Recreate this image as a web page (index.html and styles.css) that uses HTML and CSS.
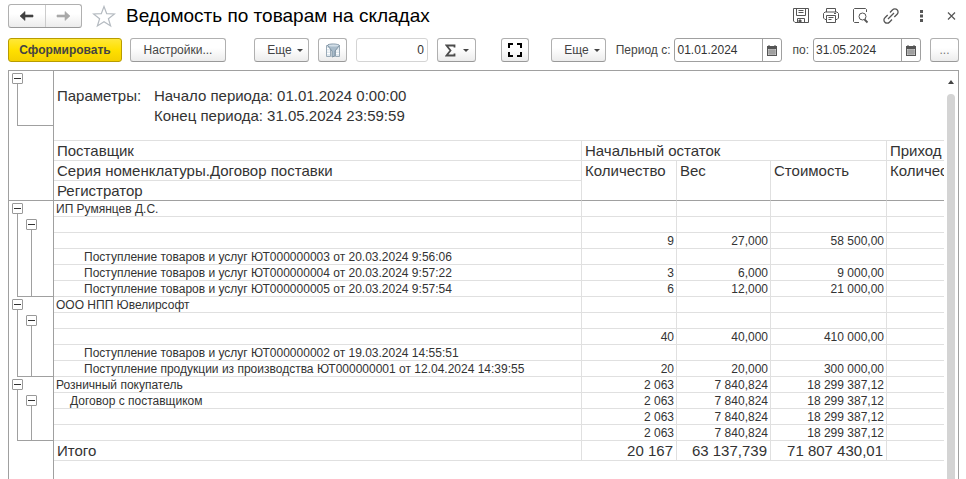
FILE: index.html
```html
<!DOCTYPE html>
<html lang="ru">
<head>
<meta charset="utf-8">
<title>Ведомость по товарам на складах</title>
<link rel="stylesheet" href="styles.css">
</head>
<body>
<header class="titlebar">
  <div class="nav">
    <button type="button" aria-label="Назад"><svg width="16" height="12" viewBox="0 0 16 12"><path d="M1 6 6 1.500V5h8v2H6v3.500z" fill="#404040" stroke="#404040" stroke-width=".6"/></svg></button>
    <button type="button" aria-label="Вперед"><svg width="16" height="12" viewBox="0 0 16 12"><path d="M15 6 10 1.500V5H2v2h8v3.500z" fill="#a9a9a9" stroke="#a9a9a9" stroke-width=".6"/></svg></button>
  </div>
  <button type="button" class="star" aria-label="В избранное"><svg width="24" height="23" viewBox="0 0 24 23"><path d="M12 1.500 14.700 8.700 22.500 9 16.400 13.700 18.600 21 12 16.800 5.400 21 7.600 13.700 1.500 9 9.300 8.700z" fill="none" stroke="#b4bac0" stroke-width="1.200"/></svg></button>
  <h1>Ведомость по товарам на складах</h1>
  <div class="tools">
    <button type="button" aria-label="Сохранить"><svg width="16" height="16" viewBox="0 0 16 16" fill="none" stroke="#555"><path d="M.5.500h15v14H2L.5 13zM3.500.500v7h9v-7M5.500 2.500h5M5.500 4.500h5M4.500 14.500v-4h7v4"/><path d="M6 12h2v2.500H6z" fill="#555"/></svg></button>
    <button type="button" aria-label="Печать"><svg width="16" height="16" viewBox="0 0 16 16" fill="none" stroke="#555"><path d="M3.500 4V.5h9V4M3.500 11.500H2L.5 10V5.500L2 4h12l1.500 1.500V10L14 11.500h-1.500M3.500 7.500h9v7h-9zM5.500 9.500h5M5.500 11.500h3M11 5.500h2"/></svg></button>
    <button type="button" aria-label="Предварительный просмотр"><svg width="16" height="16" viewBox="0 0 16 16" fill="none" stroke="#555"><path d="M13.500 4V1.500l-1-1H1.500l-1 1v12l1 1H6"/><circle cx="9.500" cy="8.500" r="3.500"/><path d="m11.500 11.500 3 3" stroke-width="1.800"/></svg></button>
    <button type="button" aria-label="Получить ссылку"><svg width="16" height="16" viewBox="0 0 16 16" fill="none" stroke="#555" stroke-width="1.300"><path d="m5 11 6-6M7 4.500l2.600-2.700a3 3 0 0 1 4.500 0 3 3 0 0 1 0 4.400L11.300 9M9 11.500l-2.600 2.700a3 3 0 0 1-4.500 0 3 3 0 0 1 0-4.400L4.700 7"/></svg></button>
    <button type="button" aria-label="Меню"><svg width="16" height="16" viewBox="0 0 16 16" fill="#555"><path d="M7 2h3v3H7zM7 6.500h3v3H7zM7 11h3v3H7z"/></svg></button>
    <button type="button" aria-label="Закрыть"><svg width="16" height="16" viewBox="0 0 16 16" fill="none" stroke="#555" stroke-width="1.200"><path d="m5 4.500 7 7M12 4.500l-7 7"/></svg></button>
  </div>
</header>

<div class="toolbar">
  <button type="button" class="btn primary">Сформировать</button>
  <button type="button" class="btn settings">Настройки...</button>
  <button type="button" class="btn more">Еще<span class="caret"></span></button>
  <button type="button" class="btn icon" aria-label="Отбор"><svg width="16" height="15" viewBox="0 0 16 15"><path d="M1.500 2.500h4v11h-4zM10.500 2.500h4v11h-4z" fill="#dfe8ef" stroke="#9aaab7"/><path d="M2 5.500h3M2 8h3M2 10.500h3M11 8h3M11 10.500h3" stroke="#fff"/><path d="M2.500 2.500c0-2 11-2 12 0L10 8v5l-3 1V8z" fill="#a9bccb" stroke="#8094a4"/><ellipse cx="8.500" cy="2.500" rx="5" ry="1" fill="#d3dfe8"/></svg></button>
  <input class="count" type="text" value="0" aria-label="Сумма">
  <button type="button" class="btn sum" aria-label="Сумма"><svg width="11" height="13" viewBox="0 0 11 13"><path d="M9.500 3.500V1.500H1.500l4 5-4 5h8V9.500" fill="none" stroke="#4c4c4c" stroke-width="1.800"/></svg><span class="caret"></span></button>
  <button type="button" class="btn full" aria-label="Развернуть"><svg width="14" height="14" viewBox="0 0 14 14" fill="none" stroke="#000" stroke-width="2"><path d="M1 5V1h4M9 1h4v4M13 9v4H9M5 13H1V9"/></svg></button>
  <button type="button" class="btn more second">Еще<span class="caret"></span></button>
  <div class="period">
    <label for="from">Период с:</label>
    <div class="date"><input id="from" type="text" value="01.01.2024"><button type="button" aria-label="Выбрать дату начала"><svg width="10" height="11" viewBox="0 0 10 11"><path d="M0 1h10v10H0z" fill="#555"/><path d="M2 0v2M8 0v2" stroke="#555"/><path d="M1 4h8v6H1z" fill="#ccc"/><path d="M1 6h8M1 8h8M3 4v6M5 4v6M7 4v6" stroke="#777" stroke-width=".6"/></svg></button></div>
    <label for="to">по:</label>
    <div class="date"><input id="to" type="text" value="31.05.2024"><button type="button" aria-label="Выбрать дату окончания"><svg width="10" height="11" viewBox="0 0 10 11"><path d="M0 1h10v10H0z" fill="#555"/><path d="M2 0v2M8 0v2" stroke="#555"/><path d="M1 4h8v6H1z" fill="#ccc"/><path d="M1 6h8M1 8h8M3 4v6M5 4v6M7 4v6" stroke="#777" stroke-width=".6"/></svg></button></div>
    <button type="button" class="btn dots" aria-label="Выбрать период">...</button>
  </div>
</div>

<main class="sheet">
  <div class="gutter">
    <div class="head">
      <div class="group params-group"><div class="level"><button type="button" class="fold" aria-label="Свернуть"></button></div></div>
    </div>
    <div class="group rows-6"><div class="level"><button type="button" class="fold" aria-label="Свернуть"></button></div><div class="level inner"><button type="button" class="fold" aria-label="Свернуть"></button></div></div>
    <div class="group rows-5"><div class="level"><button type="button" class="fold" aria-label="Свернуть"></button></div><div class="level inner"><button type="button" class="fold" aria-label="Свернуть"></button></div></div>
    <div class="group rows-4"><div class="level"><button type="button" class="fold" aria-label="Свернуть"></button></div><div class="level inner"><button type="button" class="fold" aria-label="Свернуть"></button></div></div>
  </div>
  <div class="content">
    <dl class="params">
      <dt>Параметры:</dt>
      <dd>Начало периода: 01.01.2024 0:00:00</dd>
      <dd>Конец периода: 31.05.2024 23:59:59</dd>
    </dl>
    <table>
      <colgroup><col class="c-name"><col class="c-qty"><col class="c-weight"><col class="c-cost"><col class="c-in"></colgroup>
      <thead>
        <tr><th>Поставщик</th><th colspan="3">Начальный остаток</th><th>Приход</th></tr>
        <tr><th>Серия номенклатуры.Договор поставки</th><th rowspan="2">Количество</th><th rowspan="2">Вес</th><th rowspan="2">Стоимость</th><th rowspan="2">Количество</th></tr>
        <tr><th>Регистратор</th></tr>
      </thead>
      <tbody>
        <tr><td>ИП Румянцев Д.С.</td><td></td><td></td><td></td><td></td></tr>
        <tr><td></td><td></td><td></td><td></td><td></td></tr>
        <tr><td></td><td>9</td><td>27,000</td><td>58 500,00</td><td></td></tr>
        <tr><td class="doc">Поступление товаров и услуг ЮТ000000003 от 20.03.2024 9:56:06</td><td></td><td></td><td></td><td></td></tr>
        <tr><td class="doc">Поступление товаров и услуг ЮТ000000004 от 20.03.2024 9:57:22</td><td>3</td><td>6,000</td><td>9 000,00</td><td></td></tr>
        <tr><td class="doc">Поступление товаров и услуг ЮТ000000005 от 20.03.2024 9:57:54</td><td>6</td><td>12,000</td><td>21 000,00</td><td></td></tr>
        <tr><td>ООО НПП Ювелирсофт</td><td></td><td></td><td></td><td></td></tr>
        <tr><td></td><td></td><td></td><td></td><td></td></tr>
        <tr><td></td><td>40</td><td>40,000</td><td>410 000,00</td><td></td></tr>
        <tr><td class="doc">Поступление товаров и услуг ЮТ000000002 от 19.03.2024 14:55:51</td><td></td><td></td><td></td><td></td></tr>
        <tr><td class="doc">Поступление продукции из производства ЮТ000000001 от 12.04.2024 14:39:55</td><td>20</td><td>20,000</td><td>300 000,00</td><td></td></tr>
        <tr><td>Розничный покупатель</td><td>2 063</td><td>7 840,824</td><td>18 299 387,12</td><td></td></tr>
        <tr><td class="contract">Договор с поставщиком</td><td>2 063</td><td>7 840,824</td><td>18 299 387,12</td><td></td></tr>
        <tr><td></td><td>2 063</td><td>7 840,824</td><td>18 299 387,12</td><td></td></tr>
        <tr><td></td><td>2 063</td><td>7 840,824</td><td>18 299 387,12</td><td></td></tr>
      </tbody>
      <tfoot>
        <tr><td>Итого</td><td>20 167</td><td>63 137,739</td><td>71 807 430,01</td><td></td></tr>
      </tfoot>
    </table>
  </div>
  <div class="scroll"><span class="up"></span><span class="thumb"></span></div>
</main>
</body>
</html>
```
FILE: styles.css
```css
* { box-sizing: border-box; }

:root {
  --row: 16px;
  --head-row: 20px;
  --line: #e0e0e0;
  --dark: #a0a0a0;
}

body {
  margin: 0;
  padding: 0 7px 0 8px;
  height: 100vh;
  overflow: hidden;
  display: flex;
  flex-direction: column;
  background: #fff;
  color: #333;
  font-family: "Liberation Sans", Arial, sans-serif;
  font-size: 12px;
}

button, input { font: inherit; color: inherit; }
button { padding: 0; border: 0; background: none; }
svg { display: block; }

.titlebar {
  display: flex;
  align-items: center;
  height: 32px;
  flex: none;
}

.nav {
  display: flex;
  width: 74px;
  height: 24px;
  border: 1px solid #b0b0b0;
  border-bottom-color: #999;
  border-radius: 3px;
  background: linear-gradient(#fff 40%, #ececec);
}

.nav button { flex: 1; display: grid; place-items: center; }
.nav button + button { border-left: 1px solid #ccc; }
.star { margin-left: 10px; }

h1 {
  margin: 0 0 0 10px;
  color: #000;
  font-size: 19px;
  font-weight: 400;
  line-height: 24px;
  white-space: nowrap;
}

.tools { display: flex; gap: 14px; margin-left: auto; }

.toolbar {
  display: flex;
  align-items: center;
  flex: none;
  margin: 6px 0 8px;
  height: 24px;
  white-space: nowrap;
}

.btn {
  display: flex;
  align-items: center;
  justify-content: center;
  flex: none;
  height: 24px;
  border: 1px solid #b0b0b0;
  border-bottom-color: #999;
  border-radius: 3px;
  background: linear-gradient(#fff 40%, #ececec);
  color: #444;
}

.primary {
  width: 114px;
  border-color: #b89c00;
  background: linear-gradient(#ffe838, #ffe000 50%, #f4d000);
  font-weight: 700;
}

.settings { width: 96px; margin-left: 8px; }
.more { width: 55px; margin-left: 28px; gap: 5px; padding-left: 7px; }
.icon { width: 29px; margin-left: 9px; }
.sum { width: 39px; margin-left: 9px; gap: 7px; }
.full { width: 28px; margin-left: 25px; }
.second { margin-left: 22px; }
.dots { width: 29px; margin-left: 9px; color: #777; }

.caret {
  border: 3px solid transparent;
  border-top-color: #444;
  border-bottom: 0;
}

.count {
  width: 72px;
  height: 24px;
  margin-left: 9px;
  padding: 0 3px;
  border: 1px solid #d4d4d4;
  border-radius: 3px;
  text-align: right;
}

.period { display: flex; align-items: center; margin-left: auto; color: #444; }
.period label + .date { margin-left: 4px; }
.date + label { margin-left: 10px; }

.date {
  display: flex;
  width: 108px;
  height: 24px;
  border: 1px solid #a0a0a0;
  border-radius: 3px;
}

.date input {
  flex: 1;
  min-width: 0;
  padding: 0 2px;
  border: 0;
  background: none;
  color: #333;
}

.date button {
  display: grid;
  place-items: center;
  width: 19px;
  border-left: 1px solid #a0a0a0;
}

.sheet {
  flex: 1;
  min-height: 0;
  display: flex;
  overflow: hidden;
  border: 1px solid var(--dark);
  border-bottom: 0;
}

.gutter { flex: none; width: 45px; border-right: 1px solid var(--dark); }
.head { height: 130px; border-bottom: 1px solid var(--dark); }

.group {
  display: flex;
  gap: 3px;
  padding-left: 3px;
  background: linear-gradient(var(--dark), var(--dark)) 8px 100% / 100% 1px no-repeat;
}

.params-group { height: 55px; }
.rows-6 { height: calc(6 * var(--row)); }
.rows-5 { height: calc(5 * var(--row)); }
.rows-4 { height: calc(4 * var(--row)); }

.level {
  width: 11px;
  padding-top: 2px;
  background: linear-gradient(var(--dark), var(--dark)) 50% 0 / 1px 100% no-repeat;
  background-origin: content-box;
  background-clip: content-box;
}

.inner { padding-top: calc(var(--row) + 2px); }

.fold {
  display: grid;
  place-items: center;
  width: 11px;
  height: 11px;
  border: 1px solid #999;
  border-radius: 1px;
  background: #fff;
}

.fold::before { content: ""; width: 7px; height: 1px; background: #333; }

.content { flex: 1; min-width: 0; overflow: hidden; }

.params {
  display: grid;
  grid-template-columns: 97px 1fr;
  grid-auto-rows: var(--head-row);
  align-content: start;
  height: 69px;
  margin: 0;
  padding: 15px 3px 0;
  font-size: 15px;
  line-height: 20px;
}

.params dd { margin: 0; grid-column: 2; }

table {
  table-layout: fixed;
  width: 984px;
  border-collapse: separate;
  border-spacing: 0;
  border-top: 1px solid var(--line);
}

.c-name { width: 528px; }
.c-qty { width: 95px; }
.c-weight { width: 94px; }
.c-cost { width: 116px; }
.c-in { width: 151px; }

th, td {
  border-right: 1px solid var(--line);
  border-bottom: 1px solid var(--line);
  white-space: nowrap;
}

th {
  height: var(--head-row);
  padding: 0 3px;
  font-size: 15px;
  font-weight: 400;
  line-height: 19px;
  text-align: left;
  vertical-align: top;
}

thead tr:last-child th, th[rowspan] { border-bottom-color: var(--dark); }

td { height: var(--row); padding: 1px 2px 0; line-height: 14px; text-align: right; }
td:first-child { text-align: left; }
td.doc { padding-left: 30px; }
td.contract { padding-left: 16px; }

tfoot td { height: var(--head-row); padding: 0 3px; font-size: 15px; line-height: 19px; }

.scroll {
  display: flex;
  flex-direction: column;
  align-items: center;
  gap: 10px;
  flex: none;
  width: 14px;
  padding-top: 9px;
}

.up { border: 3px solid transparent; border-bottom: 4px solid #444; border-top: 0; }
.thumb { flex: 1; width: 8px; border-radius: 4px 4px 0 0; background: #d4d4d4; }
```
